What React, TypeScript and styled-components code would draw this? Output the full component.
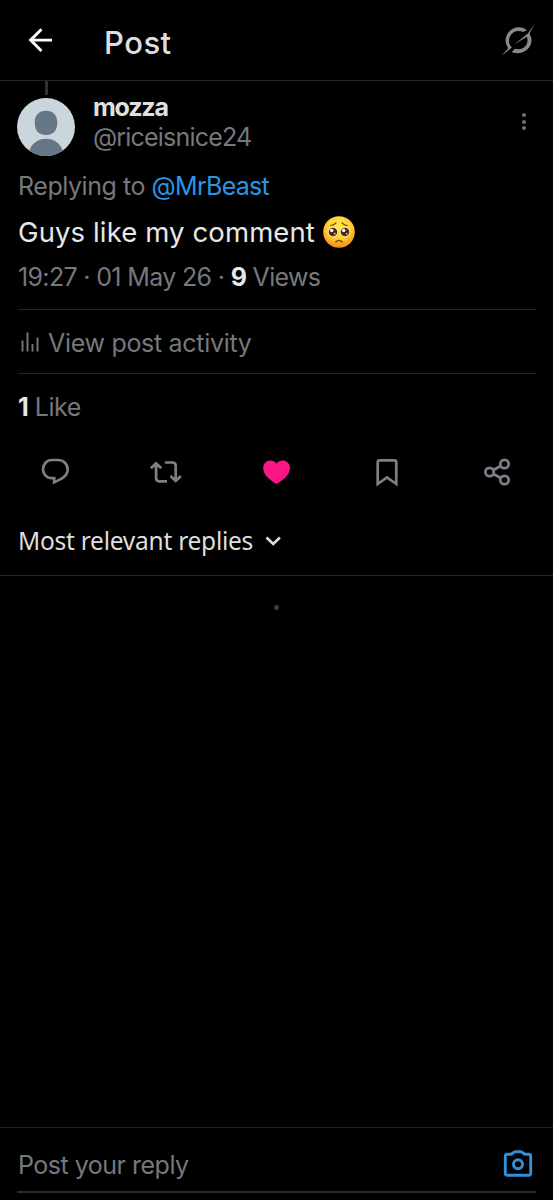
import React from "react";
import styled, { createGlobalStyle } from "styled-components";

const Global = createGlobalStyle`
  * { box-sizing: border-box; }
  body { margin: 0; background: #000; font-family: Inter, "Noto Sans", sans-serif; color: #dedede; }
`;

const Screen = styled.div`
  display: flex;
  flex-direction: column;
  width: 553px;
  height: 1200px;
  overflow: hidden;
  background: #000;
`;

const Header = styled.header`
  display: flex;
  align-items: center;
  height: 81px;
  padding: 0 17px 0 24px;
  border-bottom: 1px solid #242424;
`;

const Title = styled.h1`
  flex: 1;
  margin: 5px 0 0 46px;
  font-size: 31px;
  line-height: 36px;
  font-weight: 500;
  letter-spacing: 0.5px;
`;

const Post = styled.article`
  padding: 0 17px 0 18px;
`;

const Author = styled.div`
  display: flex;
  height: 75px;
`;

const AvatarColumn = styled.div`
  display: flex;
  flex-direction: column;
  align-items: center;
  width: 58px;
  margin-left: -1px;
`;

const Thread = styled.div`
  width: 3px;
  height: 14px;
  margin-bottom: 3px;
  background: #303234;
`;

const Names = styled.div`
  flex: 1;
  padding: 12px 0 0 18px;
`;

const Text = styled.div<{ $size?: number; $line?: number; $spacing?: number; $top?: number }>`
  margin-top: ${(p) => p.$top ?? 0}px;
  font-size: ${(p) => p.$size ?? 25}px;
  line-height: ${(p) => p.$line ?? 30}px;
  letter-spacing: ${(p) => p.$spacing ?? 0}px;
  color: #75787c;
  white-space: nowrap;
`;

const Name = styled(Text)`
  font-weight: 700;
  color: #e0e0e0;
`;

const Body = styled(Text)`
  display: flex;
  align-items: center;
  gap: 8px;
  color: #e7e7e7;
`;

const Strong = styled.b`
  font-weight: 700;
  color: #e7e7e7;
`;

const Mention = styled.span<{ $spacing: number }>`
  color: #2a95e4;
  letter-spacing: ${(p) => p.$spacing}px;
`;

const More = styled.div`
  display: flex;
  flex-direction: column;
  gap: 2.6px;
  padding: 32px 10px 0 0;
`;

const Dot = styled.span`
  width: 4px;
  height: 4px;
  border-radius: 50%;
  background: #717171;
`;

const Activity = styled.div`
  display: flex;
  align-items: center;
  gap: 8px;
  height: 65px;
  margin-top: 17px;
  padding: 2px 0 0 2px;
  border-top: 1px solid #242424;
  border-bottom: 1px solid #242424;
`;

const Actions = styled.div`
  display: grid;
  grid-template-columns: repeat(5, 1fr);
  height: 40px;
  align-items: center;
  justify-items: center;
  margin-top: 30px;
`;

const Sort = styled.div`
  display: flex;
  align-items: center;
  gap: 12px;
  height: 68px;
  margin-top: 16px;
  padding: 0 0 2px 18px;
  border-bottom: 1px solid #242424;
  font-family: "Noto Sans", sans-serif;
`;

const SortLabel = styled.span`
  font-size: 24.5px;
  line-height: 34px;
  letter-spacing: -0.25px;
  color: #dedede;
`;

const Replies = styled.main`
  flex: 1;
  display: flex;
  justify-content: center;
  padding-top: 29px;
`;

const Loader = styled.div`
  width: 5px;
  height: 5px;
  border-radius: 2px;
  background: #3a3a3a;
`;

const Composer = styled.footer`
  height: 73px;
  padding: 0 17px;
  border-top: 1px solid #202020;
`;

const Field = styled.div`
  display: flex;
  align-items: center;
  justify-content: space-between;
  height: 65px;
  padding: 11px 3px 0 1px;
  border-bottom: 2px solid #2b2c2e;
`;

const stroke = { fill: "none", stroke: "#7c8187", strokeWidth: 2.7 };

const Back = () => (
  <svg width="34" height="34" viewBox="24 23.5 34 34" fill="none" stroke="#fff" strokeWidth="2.9">
    <path d="M52 40.6H31M41.5 29.7 30.6 40.6l10.9 10.9" />
  </svg>
);

const Grok = () => (
  <svg width="36" height="36" viewBox="500 22 36 36" fill="#868a90">
    <path d="M526.8 30.2C520.4 24.8 510 27.3 506.5 35.8c-1.7 4.2-.9 8.1 1.2 11.4.6 1-.1 1.8-1.1 2.9L501.4 56l10.500-8.500c-3-3-3.800-7.300-1.900-11.100 2.600-5.100 8.200-6.500 13-4.300Z" />
    <path d="m514.3 44.6 13.2-10.8L535 24l-4.9 8.2c-.6 1.1-.4 2 .3 3.300 4.700 10.200-6.600 21.600-18.700 16.400l3.200-3.100c8.500 2.300 14.700-4.300 12-12Z" />
  </svg>
);

const Avatar = () => (
  <svg width="58" height="58" viewBox="0 0 58 58">
    <defs>
      <clipPath id="avatar"><circle cx="29" cy="29" r="29" /></clipPath>
    </defs>
    <g clipPath="url(#avatar)">
      <rect width="58" height="58" fill="#cbd5dc" />
      <path d="M29 12.8c7 0 11.3 4.6 11.3 11.3 0 8-3.2 13-11.3 13s-11.300-5-11.300-13c0-6.700 4.300-11.300 11.300-11.300Z" fill="#657786" />
      <path d="M12 54c2.200-8.600 8.800-13.200 17-13.200S43.800 45.400 46 54v5H12Z" fill="#657786" />
    </g>
  </svg>
);

const Pleading = () => (
  <svg width="32" height="32" viewBox="0 0 32 32">
    <defs>
      <radialGradient id="face" cx=".5" cy=".32" r=".68">
        <stop offset="0" stopColor="#ffe950" />
        <stop offset=".6" stopColor="#ffcb35" />
        <stop offset="1" stopColor="#f28c13" />
      </radialGradient>
    </defs>
    <circle cx="16" cy="16" r="15.8" fill="url(#face)" />
    <path d="M7.8 9.500q3.200-.3 5.200-2.600M24.200 9.500q-3.200-.3-5.200-2.600" fill="none" stroke="#6b3b0b" strokeWidth="1.2" strokeLinecap="round" />
    <circle cx="10" cy="16" r="5" fill="#fff1c6" />
    <circle cx="22" cy="16" r="5" fill="#fff1c6" />
    <circle cx="10" cy="16" r="4.3" fill="#4b2916" />
    <circle cx="22" cy="16" r="4.3" fill="#4b2916" />
    <circle cx="8.7" cy="14.4" r="1.7" fill="#fff" />
    <circle cx="20.7" cy="14.4" r="1.7" fill="#fff" />
    <circle cx="11.7" cy="17.7" r=".9" fill="#d8c3a8" />
    <circle cx="23.7" cy="17.7" r=".9" fill="#d8c3a8" />
    <path d="M12.8 26q3.200-3 6.400 0" fill="none" stroke="#88400f" strokeWidth="1.5" strokeLinecap="round" />
  </svg>
);

const Bars = () => (
  <svg width="20" height="22" viewBox="20 331.5 20 22" fill="none" stroke="#75787c" strokeWidth="1.9">
    <path d="M22.5 340v11M27.500 332v19M32.500 343.500v7.500M37.500 337v14" />
  </svg>
);

const Reply = () => (
  <svg width="32" height="32" viewBox="39 456 32 32" {...stroke}>
    <path d="M52 460h6c5.600 0 9.700 4.200 9.700 9.500 0 4-2.200 6.700-5.700 8.900l-7.800 4v-4.200H52c-5.300 0-9-4-9-8.900 0-5.200 3.800-9.300 9-9.300Z" />
  </svg>
);

const Repost = () => (
  <svg width="34" height="32" viewBox="149 456 34 32" {...stroke}>
    <path d="M150.9 468.300l5.200-4.900 5.200 4.900M156.100 464v14c0 2 1.200 3.300 3.300 3.300h7.600M164.900 462.500h7.500c2.100 0 3.300 1.300 3.300 3.300v14.500M170.500 476l5.200 4.900 5.200-4.900" />
  </svg>
);

const Heart = () => (
  <svg width="32" height="32" viewBox="260 456 32 32" fill="#fa1685">
    <path d="M276.500 484c-8.200-4.800-13.300-9.700-13.300-16 0-7.800 9.300-10 13.300-4.500 4-5.500 13.400-3.300 13.400 4.500 0 6.300-5.200 11.200-13.400 16Z" />
  </svg>
);

const Bookmark = () => (
  <svg width="32" height="32" viewBox="371 456 32 32" {...stroke}>
    <path d="M377.700 484v-21.700c0-1.300.7-2 2-2h14.600c1.300 0 2 .7 2 2V484l-9.300-6.600Z" />
  </svg>
);

const Share = () => (
  <svg width="32" height="32" viewBox="482 456 32 32" {...stroke}>
    <circle cx="489.600" cy="472" r="4.2" />
    <circle cx="504.500" cy="464" r="4.2" />
    <circle cx="504.500" cy="480" r="4.2" />
    <path d="m493.400 470 7.300-4M493.400 474l7.300 4" />
  </svg>
);

const Chevron = () => (
  <svg width="16" height="12" viewBox="264 535 16 12" fill="none" stroke="#dedede" strokeWidth="2.6">
    <path d="m265.500 537.500 6.700 6.400 6.700-6.400" />
  </svg>
);

const Camera = () => (
  <svg width="30" height="30" viewBox="503 1150.5 30 30" fill="none" stroke="#2e91dc" strokeWidth="2.9" strokeLinejoin="round">
    <path d="M507.300 1154.800h3.200c2.100 0 2.600-2.500 5-2.500h5c2.400 0 2.900 2.500 5 2.500h3.200c1.400 0 2 .7 2 2v17c0 1.300-.7 2-2 2h-21.400c-1.300 0-2-.7-2-2v-17c0-1.300.7-2 2-2Z" />
    <circle cx="518" cy="1164.700" r="4.500" />
  </svg>
);

export default function App() {
  return (
    <Screen>
      <Global />
      <Header>
        <Back />
        <Title>Post</Title>
        <Grok />
      </Header>
      <Post>
        <Author>
          <AvatarColumn>
            <Thread />
            <Avatar />
          </AvatarColumn>
          <Names>
            <Name $line={29} $spacing={-1.2}>mozza</Name>
            <Text $line={30} $spacing={-0.8}>@riceisnice24</Text>
          </Names>
          <More>
            <Dot /><Dot /><Dot />
          </More>
        </Author>
        <Text $top={15} $spacing={-0.45}>
          Replying to <Mention $spacing={-0.7}>@MrBeast</Mention>
        </Text>
        <Body $size={27.5} $line={34} $top={14} $spacing={0.12}>
          <span>Guys like my comment</span>
          <Pleading />
        </Body>
        <Text $top={13} $spacing={-0.66}>
          19:27 · 01 May 26 · <Strong>9</Strong> Views
        </Text>
        <Activity>
          <Bars />
          <Text $spacing={-0.3}>View post activity</Text>
        </Activity>
        <Text $top={18} $spacing={-0.5}>
          <Strong>1</Strong> Like
        </Text>
      </Post>
      <Actions>
        <Reply />
        <Repost />
        <Heart />
        <Bookmark />
        <Share />
      </Actions>
      <Sort>
        <SortLabel>Most relevant replies</SortLabel>
        <Chevron />
      </Sort>
      <Replies>
        <Loader />
      </Replies>
      <Composer>
        <Field>
          <Text $spacing={-0.5}>Post your reply</Text>
          <Camera />
        </Field>
      </Composer>
    </Screen>
  );
}
